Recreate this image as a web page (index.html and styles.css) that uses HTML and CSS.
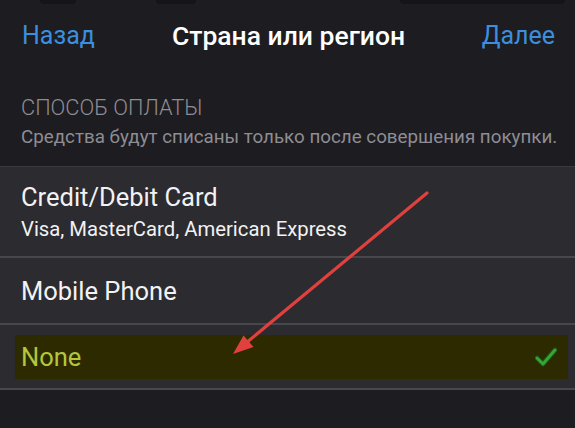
FILE: index.html
```html
<!DOCTYPE html>
<html lang="ru">
<head>
<meta charset="utf-8">
<link rel="stylesheet" href="styles.css">
</head>
<body>
<div class="screen">
  <div class="top-strip">
    <span class="blob blob-a"></span>
    <span class="blob blob-b"></span>
    <span class="blob blob-c"></span>
  </div>
  <nav class="nav">
    <span class="nav-link">Назад</span>
    <span class="nav-title">Страна или регион</span>
    <span class="nav-link nav-right">Далее</span>
  </nav>
  <div class="section-head">
    <div class="section-title">СПОСОБ ОПЛАТЫ</div>
    <div class="section-note">Средства будут списаны только после совершения покупки.</div>
  </div>
  <div class="list">
    <div class="row row-card">
      <div class="row-title">Credit/Debit Card</div>
      <div class="row-sub">Visa, MasterCard, American Express</div>
    </div>
    <div class="row row-phone">
      <div class="row-title">Mobile Phone</div>
    </div>
    <div class="row row-none">
      <div class="highlight">
        <span class="none-text">None</span>
        <svg class="check" width="22" height="20" viewBox="0 0 22 20">
          <path d="M2 11 L8 17 L20 3" fill="none" stroke="#1c4d1a" stroke-width="5" stroke-linecap="round" stroke-linejoin="round"/>
          <path d="M2 11 L8 17 L20 3" fill="none" stroke="#36a631" stroke-width="3" stroke-linecap="round" stroke-linejoin="round"/>
        </svg>
      </div>
    </div>
  </div>
  <svg class="arrow" width="575" height="428" viewBox="0 0 575 428">
    <line x1="427" y1="193" x2="246" y2="343" stroke="#e0403e" stroke-width="3.2" stroke-linecap="round"/>
    <polygon points="233,354 243.5,335.5 253.5,347" fill="#e0403e"/>
  </svg>
</div>
</body>
</html>
```

FILE: styles.css
```css
* { box-sizing: border-box; }
html, body {
  margin: 0;
  padding: 0;
  width: 575px;
  height: 428px;
  overflow: hidden;
  background: #1c1b20;
}
.screen {
  position: relative;
  width: 575px;
  height: 428px;
  background: #1d1c21;
  font-family: Roboto, "Noto Sans", sans-serif;
  color: #f2f2f4;
}
.top-strip {
  height: 4px;
  display: flex;
  align-items: flex-start;
  overflow: hidden;
}
.blob {
  display: block;
  background: #151418;
  border-radius: 0 0 30px 30px;
  height: 4px;
}
.blob-a { width: 36px; margin-left: 40px; }
.blob-b { width: 40px; margin-left: 80px; }
.blob-c { width: 165px; margin-left: 204px; border-radius: 0 0 12px 12px; }

.nav {
  display: grid;
  grid-template-columns: 1fr auto 1fr;
  align-items: center;
  margin-top: 17px;
  height: 30px;
  padding: 0 20px 0 22px;
  font-size: 25px;
  line-height: 30px;
}
.nav-link { color: #3b8fde; }
.nav-right { text-align: right; }
.nav-title { font-weight: 500; color: #ffffff; font-size: 26.5px; }

.section-head {
  padding: 0 0 0 21px;
  margin-top: 45px;
  color: #8e8d93;
  white-space: nowrap;
}
.section-title {
  font-size: 21.8px;
  line-height: 24px;
  font-weight: 300;
}
.section-note {
  font-size: 18.8px;
  line-height: 22px;
  margin-top: 6px;
}

.list {
  margin-top: 18px;
  background: #2c2b30;
  border-top: 1px solid #3a393e;
  border-bottom: 2px solid #48474c;
}
.row {
  padding-left: 21px;
}
.row-title {
  font-size: 25.5px;
  line-height: 28px;
}
.row-sub {
  font-size: 20.3px;
  line-height: 24px;
  margin-top: 6px;
}
.row-card {
  height: 89px;
  padding-top: 16px;
}
.row-phone {
  height: 67px;
  padding-top: 19px;
  border-top: 2px solid #48474c;
}
.row-none {
  height: 65px;
  border-top: 2px solid #48474c;
  padding: 10px 7px 0 15px;
}
.highlight {
  height: 44px;
  background: #2e2a00;
  border-radius: 2px;
  display: flex;
  align-items: center;
  justify-content: space-between;
  padding: 0 11px 0 6px;
}
.none-text {
  color: #b3c63c;
  font-size: 25.5px;
  line-height: 28px;
}
.check { display: block; }
.arrow {
  position: absolute;
  left: 0;
  top: 0;
  pointer-events: none;
}
```
